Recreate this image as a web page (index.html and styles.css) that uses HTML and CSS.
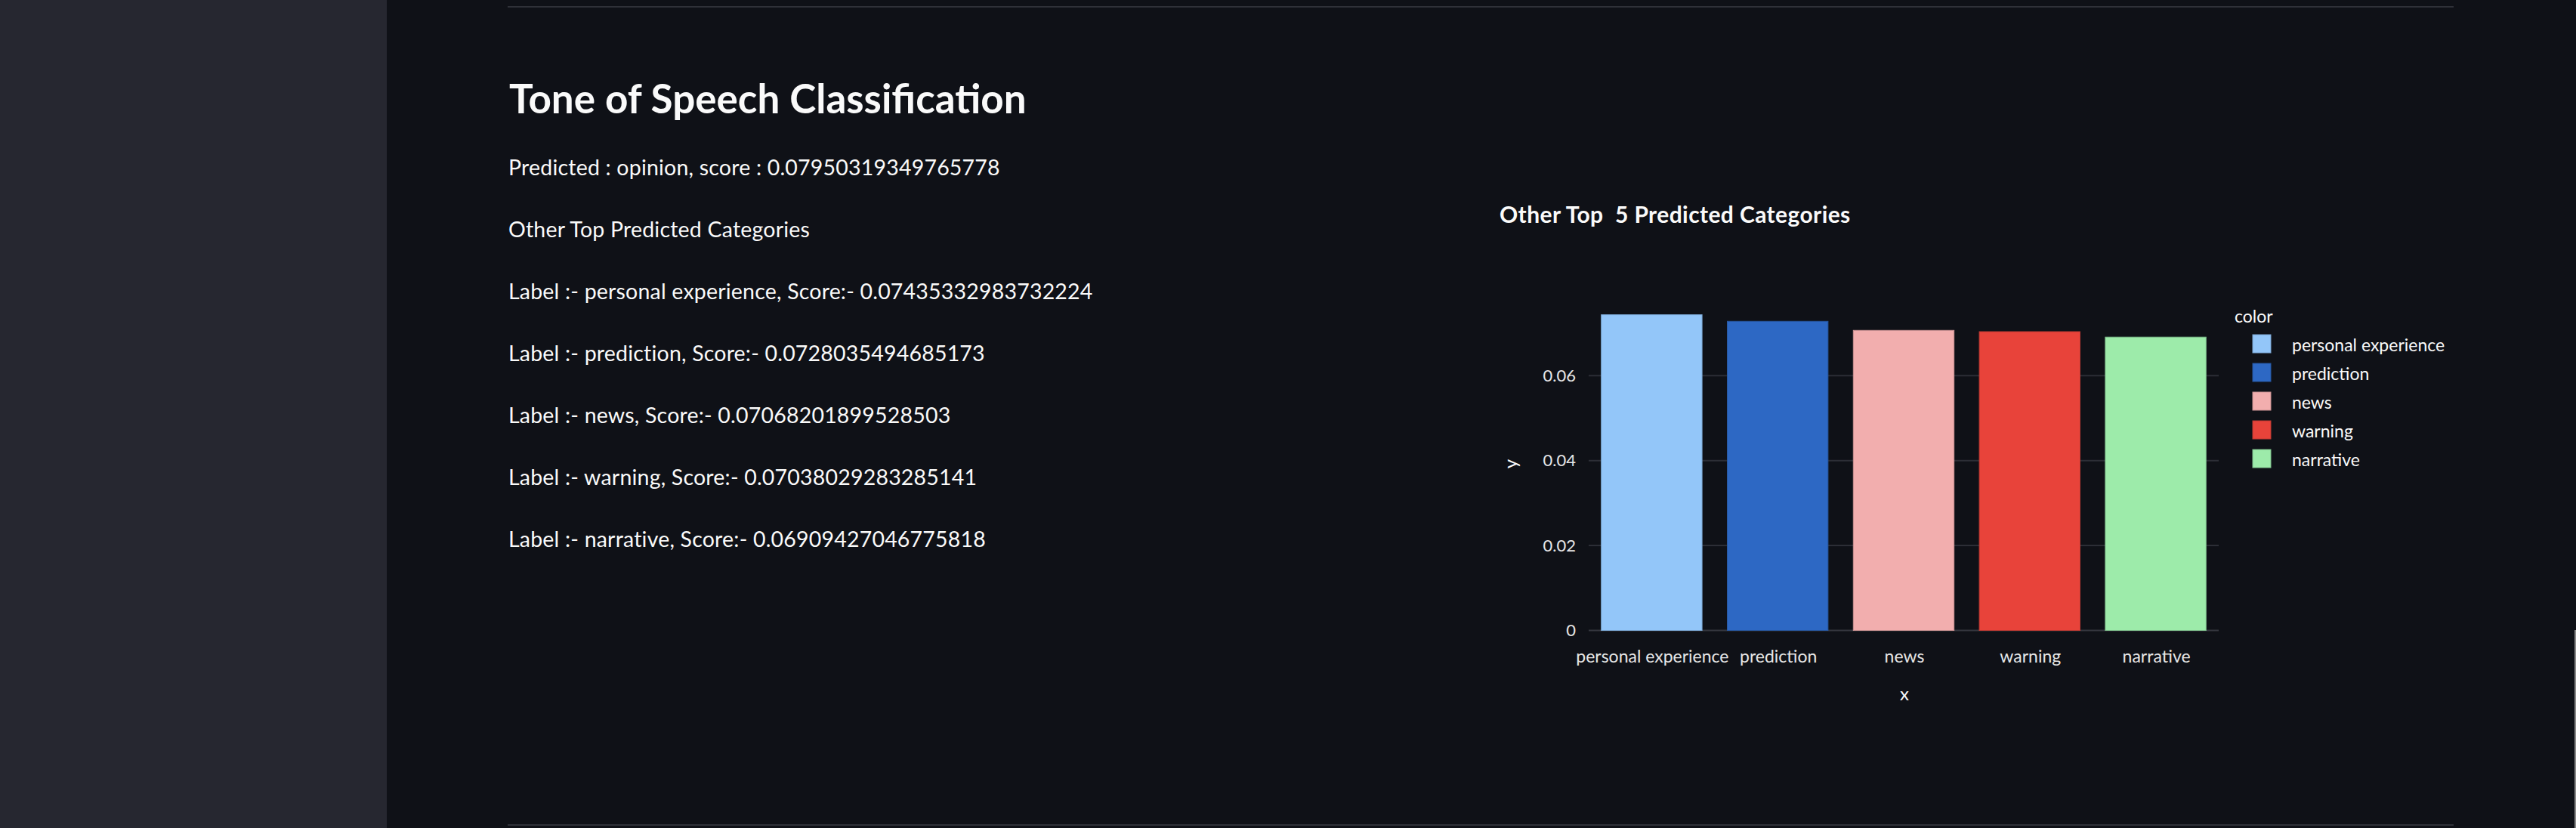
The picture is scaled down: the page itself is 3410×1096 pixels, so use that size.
FILE: index.html
```html
<!DOCTYPE html>
<html lang="en">
<head>
<meta charset="utf-8">
<title>Tone of Speech Classification</title>
<link rel="stylesheet" href="styles.css">
</head>
<body>
<div class="app">
  <aside class="sidebar"></aside>
  <main class="main">
    <hr class="rule rule-top">
    <h1 class="title">Tone of Speech Classification</h1>
    <div class="cols">
      <section class="col col-text">
        <p class="line">Predicted : opinion, score : 0.07950319349765778</p>
        <p class="line">Other Top Predicted Categories</p>
        <p class="line">Label :- personal experience, Score:- 0.07435332983732224</p>
        <p class="line">Label :- prediction, Score:- 0.0728035494685173</p>
        <p class="line">Label :- news, Score:- 0.07068201899528503</p>
        <p class="line">Label :- warning, Score:- 0.07038029283285141</p>
        <p class="line">Label :- narrative, Score:- 0.06909427046775818</p>
      </section>
      <section class="col col-chart">
        <svg class="chart" width="1272" height="780" viewBox="1976 180 1272 780" xmlns="http://www.w3.org/2000/svg">
          <text class="chart-title" x="1985" y="295">Other Top&#160; 5 Predicted Categories</text>

          <g class="grid">
            <line x1="2103" y1="497.3" x2="2937" y2="497.3"/>
            <line x1="2103" y1="609.7" x2="2937" y2="609.7"/>
            <line x1="2103" y1="722.1" x2="2937" y2="722.1"/>
            <line class="zero" x1="2103" y1="834.5" x2="2937" y2="834.5"/>
          </g>

          <g class="bars">
            <rect x="2119.7" y="416.6" width="133.4" height="417.9" fill="#93c6f9" stroke="#7aa6d2"/>
            <rect x="2286.5" y="425.3" width="133.4" height="409.2" fill="#2d68c4" stroke="#27579f"/>
            <rect x="2453.3" y="437.3" width="133.4" height="397.2" fill="#f2aeae" stroke="#c99191"/>
            <rect x="2620.1" y="439.0" width="133.4" height="395.5" fill="#e8433a" stroke="#bd3a33"/>
            <rect x="2786.9" y="446.2" width="133.4" height="388.3" fill="#9debaa" stroke="#7fbf8c"/>
          </g>

          <g class="ticks">
            <text x="2086" y="842">0</text>
            <text x="2086" y="729.5">0.02</text>
            <text x="2086" y="617">0.04</text>
            <text x="2086" y="504.5">0.06</text>
          </g>
          <text class="axis-title" x="0" y="0" transform="translate(2008 614) rotate(-90)">y</text>

          <g class="xlabels">
            <text x="2187.4" y="877">personal experience</text>
            <text x="2354.2" y="877">prediction</text>
            <text x="2521" y="877">news</text>
            <text x="2687.8" y="877">warning</text>
            <text x="2854.6" y="877">narrative</text>
          </g>
          <text class="axis-title" x="2521" y="927">x</text>

          <g class="legend">
            <text class="legend-title" x="2958" y="427">color</text>
            <rect x="2982" y="443" width="24" height="24" fill="#93c6f9" stroke="#7aa6d2"/>
            <text x="3034" y="465">personal experience</text>
            <rect x="2982" y="481" width="24" height="24" fill="#2d68c4" stroke="#27579f"/>
            <text x="3034" y="503">prediction</text>
            <rect x="2982" y="519" width="24" height="24" fill="#f2aeae" stroke="#c99191"/>
            <text x="3034" y="541">news</text>
            <rect x="2982" y="557" width="24" height="24" fill="#e8433a" stroke="#bd3a33"/>
            <text x="3034" y="579">warning</text>
            <rect x="2982" y="595" width="24" height="24" fill="#9debaa" stroke="#7fbf8c"/>
            <text x="3034" y="617">narrative</text>
          </g>
        </svg>
      </section>
    </div>
    <hr class="rule rule-bottom">
  </main>
</div>
<div class="scroll-thumb"></div>
</body>
</html>
```

FILE: styles.css
```css
html, body {
  margin: 0;
  padding: 0;
  height: 100%;
  background: #0f1117;
  color: #fafafa;
  font-family: Lato, "Liberation Sans", sans-serif;
  overflow: hidden;
}

.app {
  display: flex;
  height: 1096px;
}

.sidebar {
  width: 512px;
  flex: 0 0 512px;
  background: #262730;
}

.main {
  flex: 1;
  display: flex;
  flex-direction: column;
  padding: 8px 162px 0 160px;
  box-sizing: border-box;
}

.rule {
  border: 0;
  height: 2px;
  margin: 0;
  background: #2f3138;
  flex: 0 0 auto;
}

.rule-bottom {
  margin-top: auto;
  margin-bottom: 3px;
}

.title {
  margin: 80px 0 0 2px;
  font-size: 53px;
  font-weight: 700;
  line-height: 80px;
  height: 80px;
  letter-spacing: 0;
}

.cols {
  display: grid;
  grid-template-columns: 1272px 1272px;
  column-gap: 32px;
  margin-top: 10px;
}

.col-text {
  display: flex;
  flex-direction: column;
}

.line {
  margin: 0 0 0 1px;
  font-size: 28.5px;
  letter-spacing: 0.2px;
  line-height: 82px;
  height: 82px;
  white-space: nowrap;
}

.chart {
  display: block;
  font-family: Lato, "Liberation Sans", sans-serif;
}

.chart-title {
  font-size: 30px;
  font-weight: 700;
  letter-spacing: 0.4px;
  fill: #fafafa;
}

.grid line {
  stroke: #2c2e36;
  stroke-width: 2;
}

.grid .zero {
  stroke: #34363f;
}

.bars rect {
  stroke-width: 1;
}

.ticks text {
  font-size: 22px;
  fill: #e6e6e6;
  text-anchor: end;
}

.axis-title {
  font-size: 24px;
  fill: #fafafa;
  text-anchor: middle;
}

.xlabels text {
  font-size: 23px;
  fill: #e6e6e6;
  text-anchor: middle;
}

.legend text {
  font-size: 23px;
  fill: #fafafa;
}

.legend rect {
  stroke-width: 1;
}

.scroll-thumb {
  position: absolute;
  right: 0;
  top: 834px;
  width: 2px;
  height: 262px;
  background: #8a8a8a;
}
```
